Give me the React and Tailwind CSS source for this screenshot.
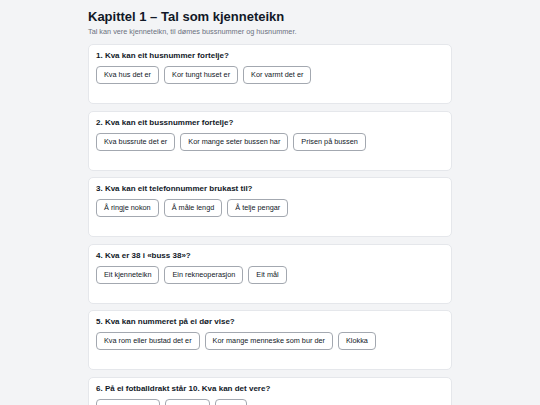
import { useState } from "react";

const questions = [
  {
    q: "1. Kva kan eit husnummer fortelje?",
    options: ["Kva hus det er", "Kor tungt huset er", "Kor varmt det er"],
  },
  {
    q: "2. Kva kan eit bussnummer fortelje?",
    options: ["Kva bussrute det er", "Kor mange seter bussen har", "Prisen på bussen"],
  },
  {
    q: "3. Kva kan eit telefonnummer brukast til?",
    options: ["Å ringje nokon", "Å måle lengd", "Å telje pengar"],
  },
  {
    q: "4. Kva er 38 i «buss 38»?",
    options: ["Eit kjenneteikn", "Ein rekneoperasjon", "Eit mål"],
  },
  {
    q: "5. Kva kan nummeret på ei dør vise?",
    options: ["Kva rom eller bustad det er", "Kor mange menneske som bur der", "Klokka"],
  },
  {
    q: "6. På ei fotballdrakt står 10. Kva kan det vere?",
    options: ["Spelarnummer", "Ein alder", "Ei tid"],
  },
];

function QuestionCard({ q, options }) {
  const [picked, setPicked] = useState(null);

  return (
    <div className="rounded-[5px] border border-[#e5e7eb] bg-white px-[7px] pt-[6px] pb-[6px]">
      <p className="text-[8px] font-bold leading-[10px]">{q}</p>
      <div className="mt-[5px] flex flex-wrap gap-[5px]">
        {options.map((opt, i) => (
          <button
            key={opt}
            onClick={() => setPicked(i)}
            className={
              "h-[18px] rounded-[4px] border border-[#a3a8b0] bg-white px-[7px] text-[7.3px] leading-none text-[#111827] " +
              (picked === i ? "bg-gray-100" : "")
            }
          >
            {opt}
          </button>
        ))}
      </div>
      <div className="mt-[2px] h-[11px] text-[7px]" />
    </div>
  );
}

export default function App() {
  return (
    <div className="min-h-screen bg-[#f3f4f6] font-['Liberation_Sans',Arial,sans-serif] text-[#111827]">
      <div className="mx-auto w-[364px] pt-[8px]">
        <h1 className="text-[13px] font-bold leading-[17px]">Kapittel 1 – Tal som kjenneteikn</h1>
        <p className="mt-[2px] text-[7.3px] leading-[10px] text-[#6b7280]">
          Tal kan vere kjenneteikn, til dømes bussnummer og husnummer.
        </p>
        <div className="mt-[7px] flex flex-col gap-[6.5px]">
          {questions.map((item) => (
            <QuestionCard key={item.q} q={item.q} options={item.options} />
          ))}
        </div>
      </div>
    </div>
  );
}
